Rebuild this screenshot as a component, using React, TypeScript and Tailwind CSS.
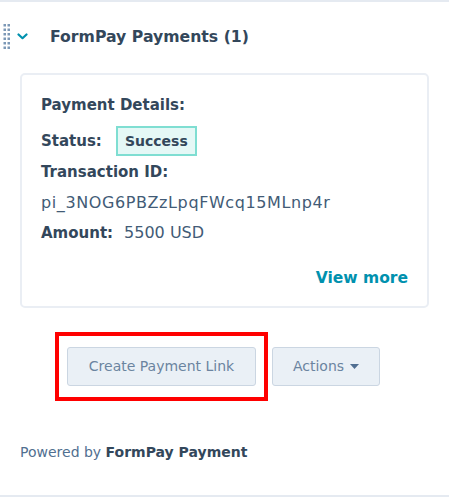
import React from "react";

const font = { fontFamily: '"DejaVu Sans", "Open Sans", sans-serif' };

function DragHandle() {
  return (
    <svg width="8" height="27" viewBox="0 0 8 27" className="shrink-0">
      {[0, 1, 2, 3, 4, 5].map((r) =>
        [0, 1].map((c) => (
          <rect key={`${r}-${c}`} x={c * 4 + 0.5} y={r * 4.5 + 1} width="2.5" height="2.5" fill="#7c98b6" />
        ))
      )}
    </svg>
  );
}

function Chevron() {
  return (
    <svg width="11" height="7" viewBox="0 0 11 7" className="shrink-0">
      <path d="M1.5 1.5 L5.5 5.2 L9.5 1.5" fill="none" stroke="#0091ae" strokeWidth="2.2" strokeLinecap="round" strokeLinejoin="round" />
    </svg>
  );
}

export default function App() {
  return (
    <div
      className="w-[449px] h-[497px] bg-white border-t-2 border-b-2 border-[#e5eaf1] flex flex-col text-[#33475b]"
      style={font}
    >
      <div className="flex items-center h-[69px] shrink-0">
        <div className="pl-[3px] pr-[6px] flex items-center">
          <DragHandle />
        </div>
        <Chevron />
        <h2 className="ml-[22px] text-[15.7px] font-bold">FormPay Payments (1)</h2>
      </div>

      <div className="mx-[20px] mt-[2px] border-2 border-[#eaeef4] rounded-[5px] pl-[19px] pr-[19px] pt-[17px] pb-[16px]">
        <div className="flex flex-col">
          <div className="text-[15px] font-bold leading-[26px]">Payment Details:</div>
          <div className="flex items-center mt-[8px]">
            <span className="text-[15px] font-bold leading-[26px]">Status:</span>
            <span className="ml-[14px] h-[30px] w-[81px] flex items-center justify-center bg-[#e5f8f6] border-2 border-[#7fded2] text-[14px] font-bold">
              Success
            </span>
          </div>
          <div className="text-[15px] font-bold leading-[26px] mt-[3px]">Transaction ID:</div>
          <div className="text-[16px] tracking-[0.6px] leading-[26px] mt-[5px] text-[#425b76]">pi_3NOG6PBZzLpqFWcq15MLnp4r</div>
          <div className="flex items-center mt-[4px] leading-[26px]">
            <span className="text-[15px] font-bold">Amount:</span>
            <span className="ml-[11px] text-[16px] text-[#425b76]">5500 USD</span>
          </div>
          <div className="flex justify-end mt-[20px]">
            <span className="text-[15.5px] font-bold text-[#0091ae] leading-[24px]">View more</span>
          </div>
        </div>
      </div>

      <div className="flex items-center mt-[24px] gap-[4px] pl-[55px]">
        <div className="border-4 border-[#ff0000] px-[8px] py-[11px]">
          <button className="h-[39px] w-[189px] rounded-[3px] bg-[#eaf0f6] border border-[#cbd6e2] text-[14px] text-[#6b84a0]">
            Create Payment Link
          </button>
        </div>
        <button className="h-[39px] w-[108px] rounded-[3px] bg-[#eaf0f6] border border-[#cbd6e2] text-[14px] text-[#6b84a0] flex items-center justify-center gap-[6px]">
          Actions
          <svg width="9" height="5" viewBox="0 0 9 5">
            <path d="M0 0 L9 0 L4.5 5 Z" fill="#506e91" />
          </svg>
        </button>
      </div>

      <div className="mt-[41px] pl-[20px] text-[14px] leading-[20px] text-[#516f90]">
        Powered by <span className="font-bold text-[#33475b]">FormPay Payment</span>
      </div>
    </div>
  );
}
